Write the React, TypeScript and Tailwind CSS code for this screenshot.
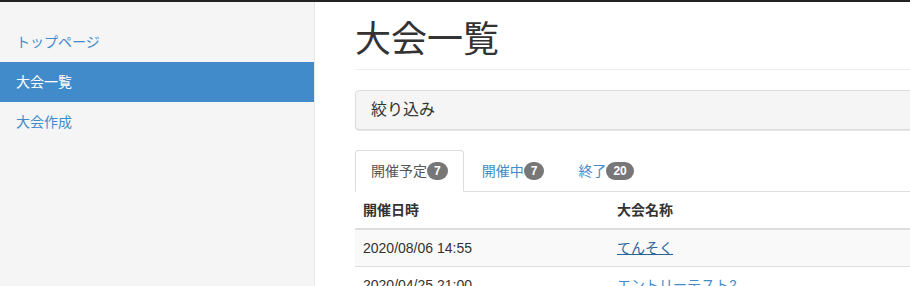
import React from "react";

const font = {
  fontFamily:
    '"Liberation Sans", Arial, "Noto Sans CJK JP", sans-serif',
};

function Badge({ n }: { n: string }) {
  return (
    <span className="inline-block rounded-[10px] bg-[#777] px-[7px] py-[3px] align-[1px] text-[12px] font-bold leading-[12px] text-white">
      {n}
    </span>
  );
}

export default function App() {
  return (
    <div
      className="flex h-[286px] w-[910px] overflow-hidden border-t-2 border-[#222] bg-white text-[14px] leading-[20px] text-[#333]"
      style={font}
    >
      <aside className="w-[315px] shrink-0 border-r border-[#e7e7e7] bg-[#f5f5f5] pt-[20px]">
        <nav className="flex flex-col">
          <a className="block h-[40px] px-[16px] py-[10px] text-[#428bca]">トップページ</a>
          <a className="block h-[40px] bg-[#428bca] px-[16px] py-[10px] text-white">大会一覧</a>
          <a className="block h-[40px] px-[16px] py-[10px] text-[#428bca]">大会作成</a>
        </nav>
      </aside>
      <main className="w-[800px] shrink-0 pl-[40px]">
        <div className="mt-[18px] mb-[20px] border-b border-[#eee] pb-[9px]">
          <h1 className="text-[36px] font-normal leading-[39.6px] text-[#333]">大会一覧</h1>
        </div>
        <div className="mb-[20px] rounded-[4px] border border-[#ddd] bg-[#f5f5f5] shadow-[0_1px_1px_rgba(0,0,0,0.1)]">
          <div className="px-[15px] py-[10px] text-[16px] leading-[18px] text-[#333]">絞り込み</div>
        </div>
        <ul className="flex border-b border-[#ddd]">
          <li className="-mb-px mr-[2px]">
            <a className="block rounded-t-[4px] border border-[#ddd] border-b-white bg-white px-[15px] py-[10px] text-[#555]">
              開催予定<Badge n="7" />
            </a>
          </li>
          <li className="-mb-px mr-[2px]">
            <a className="block rounded-t-[4px] border border-transparent px-[15px] py-[10px] text-[#428bca]">
              開催中<Badge n="7" />
            </a>
          </li>
          <li className="-mb-px mr-[2px]">
            <a className="block rounded-t-[4px] border border-transparent px-[15px] py-[10px] text-[#428bca]">
              終了<Badge n="20" />
            </a>
          </li>
        </ul>
        <table className="w-full border-collapse">
          <thead>
            <tr>
              <th className="w-[254px] border-b-2 border-[#ddd] p-[8px] text-left font-bold">開催日時</th>
              <th className="border-b-2 border-[#ddd] p-[8px] text-left font-bold">大会名称</th>
            </tr>
          </thead>
          <tbody>
            <tr className="bg-[#f9f9f9]">
              <td className="border-t border-[#ddd] p-[8px]">2020/08/06 14:55</td>
              <td className="border-t border-[#ddd] p-[8px]">
                <a className="text-[#2a6496] underline">てんそく</a>
              </td>
            </tr>
            <tr>
              <td className="border-t border-[#ddd] p-[8px]">2020/04/25 21:00</td>
              <td className="border-t border-[#ddd] p-[8px]">
                <a className="text-[#428bca]">エントリーテスト2</a>
              </td>
            </tr>
          </tbody>
        </table>
      </main>
    </div>
  );
}
